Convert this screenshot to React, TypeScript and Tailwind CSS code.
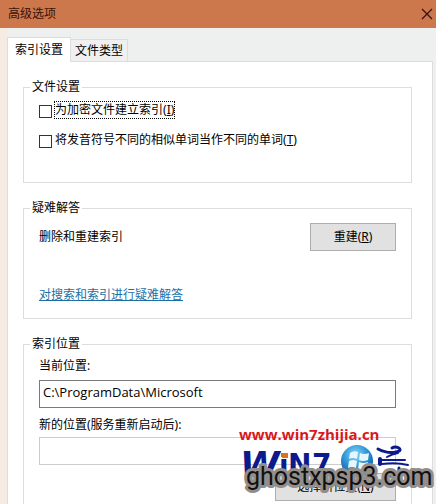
import { ReactNode } from "react";

type GroupProps = {
    title: string;
    className?: string;
    children: ReactNode;
};

const Group = ({ title, className = "", children }: GroupProps) => (
    <fieldset className={`min-w-0 border border-[#dcdddf] pr-[15px] pl-[15px] ${className}`}>
        <legend className="-ml-[9px] px-0.5 leading-4">{title}</legend>
        {children}
    </fieldset>
);

type CheckOptionProps = {
    id: string;
    label: string;
    accessKey: string;
    focused?: boolean;
};

const CheckOption = ({ id, label, accessKey, focused = false }: CheckOptionProps) => (
    <div className="flex items-center gap-0.5">
        <input id={id} type="checkbox" className="mt-0.5 size-[13px] shrink-0 appearance-none border border-[#333] bg-white checked:bg-[#333]" />
        <label htmlFor={id} className={`border border-dotted leading-4 ${focused ? "border-black" : "border-transparent"}`}>
            {label}(<u>{accessKey}</u>)
        </label>
    </div>
);

const Watermark = () => (
    <div className="pointer-events-none absolute right-0 bottom-0">
        <svg width="200" height="80" viewBox="236 424 200 80" role="img" aria-label="www.win7zhijia.cn ghostxpsp3.com">
            <defs>
                <radialGradient id="orb" cx="45%" cy="30%" r="75%">
                    <stop offset="0" stopColor="#8ed8f5" />
                    <stop offset="0.5" stopColor="#2d95d6" />
                    <stop offset="1" stopColor="#0b4c9c" />
                </radialGradient>
            </defs>
            <text x="239" y="440" fontFamily="'Open Sans', 'Noto Sans', sans-serif" fontWeight="700" fontSize="15" fill="#d7191c">
                www.win7zhijia.cn
            </text>
            <g fill="#0d1a8c" fontFamily="'DejaVu Sans', sans-serif" fontWeight="700">
                <text x="240" y="477" fontSize="36" fontStyle="italic">W</text>
                <text x="279" y="475" fontSize="28">i</text>
                <text x="288" y="474" fontSize="28">N</text>
                <text x="312" y="474" fontSize="28">7</text>
            </g>
            <rect x="282" y="453" width="6" height="5" fill="#e0701c" />
            <circle cx="357" cy="461" r="16" fill="url(#orb)" />
            <g fill="#e6f6fc">
                <path d="M350 453q4-3 8-1l-1 7q-4-2-8 0z" />
                <path d="M360 453q4 2 9 0l-1 7q-5 2-9 0z" />
                <path d="M349 461q4-2 8 0l-1 7q-4-2-8 0z" />
                <path d="M359 462q4 2 9 0l-1 7q-5 2-9 0z" />
            </g>
            <g fill="none" stroke="#0d1a8c" strokeLinecap="round" strokeLinejoin="round">
                <path d="M378 449q10 5 18 3q6-1 3-4q-4-2-7 0" strokeWidth="3" />
                <path d="M387 457q5-3 11-4" strokeWidth="2" />
                <path d="M380 459v5" strokeWidth="4" />
                <path d="M382 460h23M382 464q14-2 26 1" strokeWidth="2" />
                <path d="M388 471l2 5M399 468v8" strokeWidth="3" />
            </g>
            <text
                x="246"
                y="485"
                fontFamily="Roboto, 'Open Sans', sans-serif"
                fontSize="25"
                fill="#111"
                stroke="#938e8b"
                strokeWidth="6"
                strokeLinejoin="round"
                paintOrder="stroke"
            >
                ghostxpsp3.com
            </text>
        </svg>
    </div>
);

export default function App() {
    return (
        <div className="relative flex h-screen min-w-0 flex-col overflow-hidden bg-[#eeefef] font-['Noto_Sans','Noto_Sans_CJK_SC',sans-serif] text-xs text-black">
            <header className="flex h-7 shrink-0 items-center justify-between bg-[#cc784c] pr-[3px] pl-2 text-[#3a1208]">
                <h1 className="leading-4">高级选项</h1>
                <button type="button" aria-label="关闭" className="flex size-3 items-center justify-center">
                    <svg viewBox="0 0 12 12" className="size-3" fill="none" stroke="#3a1010" strokeWidth="1.3">
                        <path d="M1 1l10 10M11 1L1 11" />
                    </svg>
                </button>
            </header>

            <main className="flex min-h-0 flex-1 flex-col border-l-[7px] border-[#f6ebe3] pt-[9px] pr-[3px]">
                <div role="tablist" className="flex shrink-0 items-end">
                    <button type="button" role="tab" aria-selected="true" className="relative -mb-px h-[25px] border border-b-0 border-[#dcdddf] bg-white px-[7px]">
                        索引设置
                    </button>
                    <button type="button" role="tab" aria-selected="false" className="h-[22px] border border-b-0 border-l-0 border-[#dcdddf] bg-[#f0f0f1] px-1">
                        文件类型
                    </button>
                </div>

                <div role="tabpanel" className="flex flex-1 flex-col gap-[17px] border border-b-0 border-[#dcdddf] bg-white pt-[17px] pr-5 pl-[15px]">
                    <Group title="文件设置" className="h-[104px]">
                        <div className="flex flex-col gap-3 pt-1.5">
                            <CheckOption id="encrypted" label="为加密文件建立索引" accessKey="I" focused />
                            <CheckOption id="diacritics" label="将发音符号不同的相似单词当作不同的单词" accessKey="T" />
                        </div>
                    </Group>

                    <Group title="疑难解答" className="h-[119px]">
                        <div className="flex items-center justify-between pt-[7px]">
                            <span>删除和重建索引</span>
                            <button type="button" className="h-7 w-[86px] border border-[#adadad] bg-[#e1e1e1]">
                                重建(<u>R</u>)
                            </button>
                        </div>
                        <a href="#troubleshoot" className="mt-9 inline-block leading-4 text-[#1c6ea4] underline">
                            对搜索和索引进行疑难解答
                        </a>
                    </Group>

                    <Group title="索引位置" className="flex-1 border-b-0">
                        <div className="flex flex-col pt-1.5">
                            <label htmlFor="current" className="leading-4">当前位置:</label>
                            <input
                                id="current"
                                readOnly
                                value="C:\ProgramData\Microsoft"
                                className="mt-1.5 h-7 border border-[#7a7a7a] bg-white px-[3px] pb-1 font-['Open_Sans',sans-serif] text-[13px]"
                            />
                            <label htmlFor="next" className="mt-[9px] leading-4">新的位置(服务重新启动后):</label>
                            <input id="next" readOnly className="mt-1 h-7 border border-[#cccccc] bg-white px-1" />
                            <button type="button" className="mt-2 h-7 w-[121px] self-end border border-[#adadad] bg-[#e1e1e1]">
                                选择新位置(<u>N</u>)
                            </button>
                        </div>
                    </Group>
                </div>
            </main>

            <Watermark />
        </div>
    );
}
